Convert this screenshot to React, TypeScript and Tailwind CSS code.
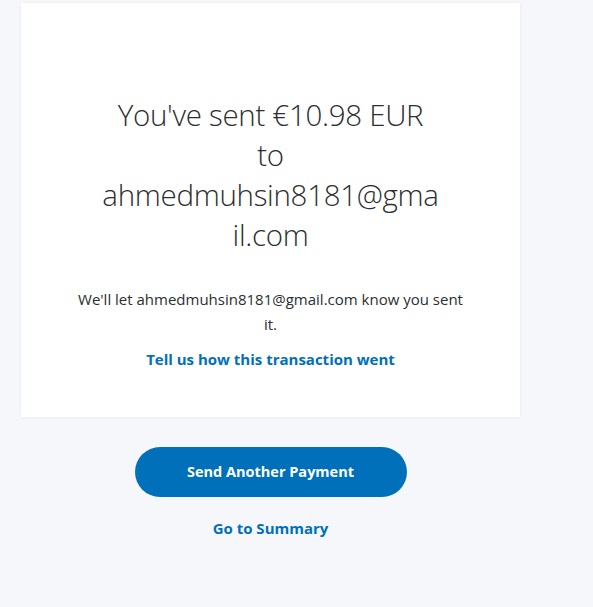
export default function App() {
  return (
    <div
      className="min-h-[607px] w-full bg-[#f5f7fa] text-[#2c2e2f]"
      style={{ fontFamily: '"Open Sans", "Liberation Sans", sans-serif' }}
    >
      <div className="w-[540px] pl-[21px] pr-5 pt-[3px]">
        <div className="flex h-[414px] flex-col items-center bg-white pt-[92px] text-center shadow-[0_0_4px_rgba(0,0,0,0.06)]">
          <h1 className="w-[339px] break-words text-[29.5px] font-light leading-[40px] tracking-[-0.3px]">
            You've sent €10.98 EUR to ahmedmuhsin8181@gmail.com
          </h1>
          <p className="mt-[32px] w-[396px] text-[15px] leading-[25px]">
            We'll let ahmedmuhsin8181@gmail.com know you sent it.
          </p>
          <a href="#" className="mt-[11px] text-[15px] font-bold text-[#0070ba]">
            Tell us how this transaction went
          </a>
        </div>
        <div className="mt-[30px] flex flex-col items-center">
          <button className="h-[50px] w-[272px] rounded-full bg-[#0070ba] text-[14.5px] font-bold text-white">
            Send Another Payment
          </button>
          <a href="#" className="mt-[20px] text-[15px] font-bold text-[#0070ba]">
            Go to Summary
          </a>
        </div>
      </div>
    </div>
  );
}
